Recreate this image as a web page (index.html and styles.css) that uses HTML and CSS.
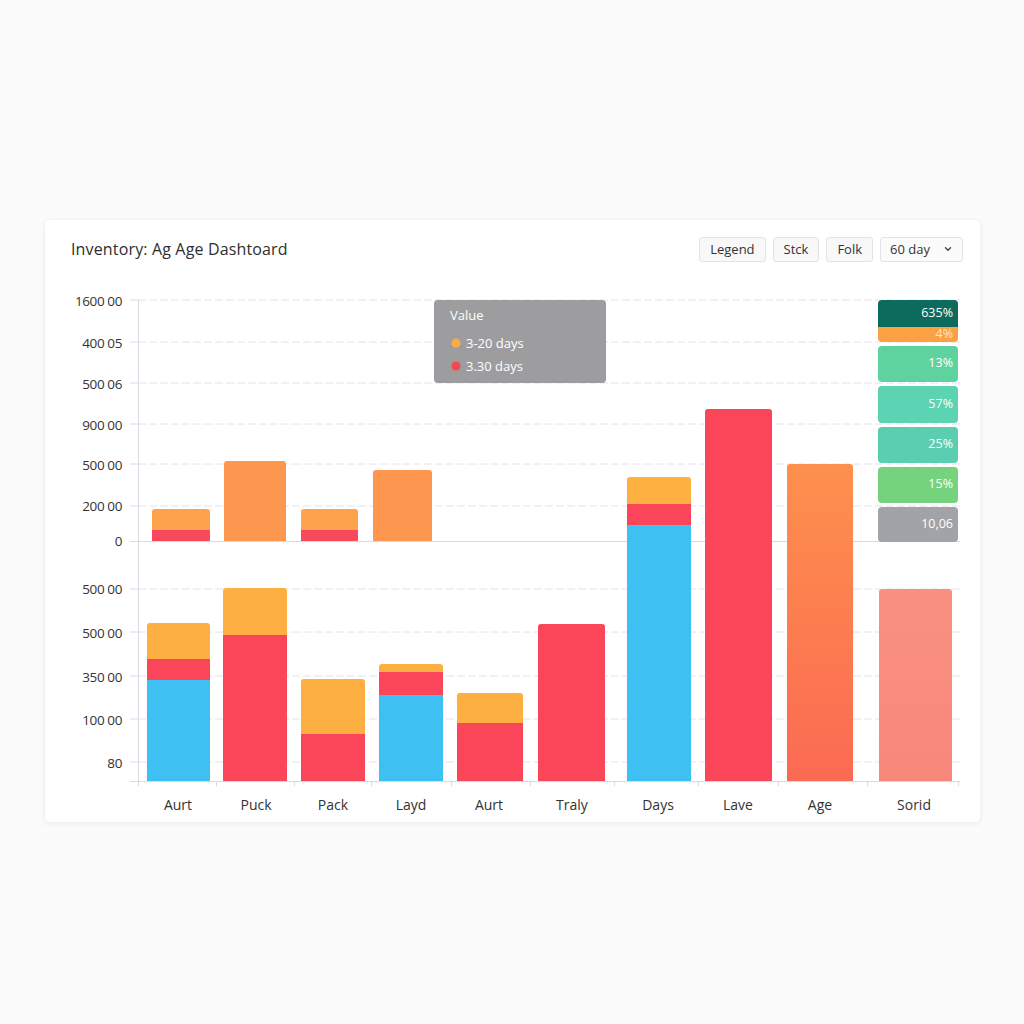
FILE: index.html
```html
<!DOCTYPE html>
<html lang="en">
<head>
<meta charset="utf-8">
<title>Inventory Age Dashboard</title>
<link rel="stylesheet" href="styles.css">
</head>
<body>
<main class="card">
  <header class="card-head">
    <h1 class="title">Inventory: Ag Age Dashtoard</h1>
    <div class="tools">
      <button class="btn">Legend</button>
      <button class="btn">Stck</button>
      <button class="btn">Folk</button>
      <button class="btn select">60 day <svg class="caret" width="8" height="6" viewBox="0 0 8 6"><path d="M1.5 1.8 L4 4.2 L6.5 1.8" fill="none" stroke="#444" stroke-width="1.4" stroke-linecap="round" stroke-linejoin="round"/></svg></button>
    </div>
  </header>
  <svg class="chart" width="935" height="544" viewBox="45 278 935 544">
    <defs>
      <linearGradient id="gAge" x1="0" y1="0" x2="0" y2="1">
        <stop offset="0" stop-color="#fe904d"/>
        <stop offset="1" stop-color="#fb6a53"/>
      </linearGradient>
      <linearGradient id="gSorid" x1="0" y1="0" x2="0" y2="1">
        <stop offset="0" stop-color="#f99180"/>
        <stop offset="1" stop-color="#f8877b"/>
      </linearGradient>
    </defs>

    <!-- grid -->
    <g class="grid">
      <line x1="138" y1="300" x2="960" y2="300"/>
      <line x1="138" y1="342" x2="960" y2="342"/>
      <line x1="138" y1="383" x2="960" y2="383"/>
      <line x1="138" y1="424" x2="960" y2="424"/>
      <line x1="138" y1="464" x2="960" y2="464"/>
      <line x1="138" y1="506" x2="960" y2="506"/>
      <line x1="138" y1="589" x2="960" y2="589"/>
      <line x1="138" y1="632" x2="960" y2="632"/>
      <line x1="138" y1="676" x2="960" y2="676"/>
      <line x1="138" y1="719" x2="960" y2="719"/>
      <line x1="138" y1="762" x2="960" y2="762"/>
    </g>
    <g class="axis">
      <line x1="130" y1="541.5" x2="960" y2="541.5"/>
      <line x1="138.5" y1="300" x2="138.5" y2="786"/>
      <line x1="130" y1="781.5" x2="960" y2="781.5"/>
      <line x1="130" y1="300" x2="138" y2="300"/>
      <line x1="130" y1="342" x2="138" y2="342"/>
      <line x1="130" y1="383" x2="138" y2="383"/>
      <line x1="130" y1="424" x2="138" y2="424"/>
      <line x1="130" y1="464" x2="138" y2="464"/>
      <line x1="130" y1="506" x2="138" y2="506"/>
      <line x1="130" y1="589" x2="138" y2="589"/>
      <line x1="130" y1="632" x2="138" y2="632"/>
      <line x1="130" y1="676" x2="138" y2="676"/>
      <line x1="130" y1="719" x2="138" y2="719"/>
      <line x1="130" y1="762" x2="138" y2="762"/>
      <line x1="216.5" y1="781" x2="216.5" y2="786"/>
      <line x1="294.5" y1="781" x2="294.5" y2="786"/>
      <line x1="371.5" y1="781" x2="371.5" y2="786"/>
      <line x1="451.5" y1="781" x2="451.5" y2="786"/>
      <line x1="530.5" y1="781" x2="530.5" y2="786"/>
      <line x1="614.5" y1="781" x2="614.5" y2="786"/>
      <line x1="698.5" y1="781" x2="698.5" y2="786"/>
      <line x1="778.5" y1="781" x2="778.5" y2="786"/>
      <line x1="867.5" y1="781" x2="867.5" y2="786"/>
      <line x1="958.5" y1="781" x2="958.5" y2="786"/>
    </g>

    <!-- y labels -->
    <g class="ylab">
      <text x="122" y="302">1600 00</text>
      <text x="122" y="344">400 05</text>
      <text x="122" y="385">500 06</text>
      <text x="122" y="426">900 00</text>
      <text x="122" y="466">500 00</text>
      <text x="122" y="507">200 00</text>
      <text x="122" y="542">0</text>
      <text x="122" y="590">500 00</text>
      <text x="122" y="634">500 00</text>
      <text x="122" y="678">350 00</text>
      <text x="122" y="721">100 00</text>
      <text x="122" y="764">80</text>
    </g>

    <!-- upper bars -->
    <path fill="#fda34c" d="M152 541 V512 Q152 509 155 509 H207 Q210 509 210 512 V541 Z"/>
    <rect fill="#f84a5c" x="152" y="530" width="58" height="11"/>
    <path fill="#fd974f" d="M224 541 V464 Q224 461 227 461 H283 Q286 461 286 464 V541 Z"/>
    <path fill="#fda34c" d="M301 541 V512 Q301 509 304 509 H355 Q358 509 358 512 V541 Z"/>
    <rect fill="#f84a5c" x="301" y="530" width="57" height="11"/>
    <path fill="#fd974f" d="M373 541 V473 Q373 470 376 470 H429 Q432 470 432 473 V541 Z"/>

    <!-- lower bars -->
    <path fill="#feaf42" d="M147 781 V626 Q147 623 150 623 H207 Q210 623 210 626 V781 Z"/>
    <rect fill="#fb4659" x="147" y="659" width="63" height="122"/>
    <rect fill="#3ec0f2" x="147" y="680" width="63" height="101"/>

    <path fill="#feaf42" d="M223 781 V591 Q223 588 226 588 H284 Q287 588 287 591 V781 Z"/>
    <rect fill="#fb4659" x="223" y="635" width="64" height="146"/>

    <path fill="#feaf42" d="M301 781 V682 Q301 679 304 679 H362 Q365 679 365 682 V781 Z"/>
    <rect fill="#fb4659" x="301" y="734" width="64" height="47"/>

    <path fill="#feaf42" d="M379 781 V667 Q379 664 382 664 H440 Q443 664 443 667 V781 Z"/>
    <rect fill="#fb4659" x="379" y="672" width="64" height="109"/>
    <rect fill="#3ec0f2" x="379" y="695" width="64" height="86"/>

    <path fill="#feaf42" d="M457 781 V696 Q457 693 460 693 H520 Q523 693 523 696 V781 Z"/>
    <rect fill="#fb4659" x="457" y="723" width="66" height="58"/>

    <path fill="#fb4659" d="M538 781 V627 Q538 624 541 624 H602 Q605 624 605 627 V781 Z"/>

    <path fill="#feb040" d="M627 781 V480 Q627 477 630 477 H688 Q691 477 691 480 V781 Z"/>
    <rect fill="#fb4659" x="627" y="504" width="64" height="277"/>
    <rect fill="#3ec0f2" x="627" y="525" width="64" height="256"/>

    <path fill="#fb4659" d="M705 781 V412 Q705 409 708 409 H769 Q772 409 772 412 V781 Z"/>
    <path fill="url(#gAge)" d="M787 781 V467 Q787 464 790 464 H850 Q853 464 853 467 V781 Z"/>
    <path fill="url(#gSorid)" d="M879 781 V592 Q879 589 882 589 H949 Q952 589 952 592 V781 Z"/>

    <!-- x labels -->
    <g class="xlab">
      <text x="178" y="810">Aurt</text>
      <text x="256" y="810">Puck</text>
      <text x="333" y="810">Pack</text>
      <text x="411" y="810">Layd</text>
      <text x="489" y="810">Aurt</text>
      <text x="572" y="810">Traly</text>
      <text x="658" y="810">Days</text>
      <text x="738" y="810">Lave</text>
      <text x="820" y="810">Age</text>
      <text x="914" y="810">Sorid</text>
    </g>

    <!-- tooltip -->
    <g class="tip">
      <rect x="434" y="300" width="172" height="83" rx="4" fill="#9d9da0"/>
      <text class="tip-title" x="450" y="320">Value</text>
      <circle cx="456" cy="343" r="4.5" fill="#fdaa45"/>
      <text class="tip-item" x="466" y="348">3-20 days</text>
      <circle cx="456" cy="366" r="4.5" fill="#f8474f"/>
      <text class="tip-item" x="466" y="371">3.30 days</text>
    </g>

    <!-- right stack -->
    <g class="stack">
      <path fill="#0c6b5c" d="M878 327 V304 Q878 300 882 300 H954 Q958 300 958 304 V327 Z"/>
      <path fill="#fca044" d="M878 327 H958 V338 Q958 342 954 342 H882 Q878 342 878 338 Z"/>
      <rect fill="#5fd39f" x="878" y="346" width="80" height="36" rx="4"/>
      <rect fill="#5cd3b2" x="878" y="386" width="80" height="37" rx="4"/>
      <rect fill="#5bcdb0" x="878" y="427" width="80" height="36" rx="4"/>
      <rect fill="#74d37c" x="878" y="467" width="80" height="36" rx="4"/>
      <rect fill="#a2a2a9" x="878" y="507" width="80" height="35" rx="4"/>
      <text x="953" y="314">635%</text>
      <text class="light" x="953" y="335">4%</text>
      <text x="953" y="364">13%</text>
      <text x="953" y="405">57%</text>
      <text x="953" y="445">25%</text>
      <text x="953" y="485">15%</text>
      <text x="953" y="525">10,06</text>
    </g>
  </svg>
</main>
</body>
</html>
```

FILE: styles.css
```css
* { box-sizing: border-box; }

html, body {
  margin: 0;
  padding: 0;
  background: #fbfbfc;
}

body {
  width: 1024px;
  height: 1024px;
  padding: 220px 0 0 45px;
  font-family: "Open Sans", "Liberation Sans", sans-serif;
  color: #333;
}

.card {
  width: 935px;
  height: 602px;
  background: #ffffff;
  border-radius: 4px;
  box-shadow: 0 1px 6px rgba(0, 0, 0, 0.08), 0 0 1px rgba(0, 0, 0, 0.06);
  display: flex;
  flex-direction: column;
  overflow: hidden;
}

.card-head {
  height: 58px;
  display: flex;
  align-items: center;
  justify-content: space-between;
  padding: 0 17px 0 26px;
}

.title {
  margin: 0;
  font-size: 16px;
  font-weight: 400;
  color: #2e2e30;
  letter-spacing: 0.15px;
}

.tools {
  display: flex;
  gap: 7px;
}

.btn {
  height: 25px;
  padding: 0 10px;
  border: 1px solid #e3e3e6;
  border-radius: 3px;
  background: #f8f8f9;
  font-family: "Open Sans", "Liberation Sans", sans-serif;
  font-size: 13px;
  color: #333;
  display: flex;
  align-items: center;
  gap: 14px;
}

.btn.select {
  padding: 0 10px 0 9px;
  background: #fbfbfb;
}

.caret { display: block; }

.chart {
  display: block;
  font-family: "Open Sans", "Liberation Sans", sans-serif;
}

.grid line {
  stroke: #e2e2ec;
  stroke-width: 1;
  stroke-dasharray: 8 3;
}

.axis line {
  stroke: #d9d9e4;
  stroke-width: 1;
}

.ylab text {
  font-size: 13.5px;
  fill: #333335;
  text-anchor: end;
  dominant-baseline: middle;
  letter-spacing: -0.4px;
}

.xlab text {
  font-size: 14px;
  fill: #333;
  text-anchor: middle;
}

.tip-title {
  font-size: 13px;
  fill: #ffffff;
}

.tip-item {
  font-size: 13px;
  fill: #ffffff;
}

.stack text {
  font-size: 12.5px;
  fill: #ffffff;
  text-anchor: end;
  dominant-baseline: middle;
}

.stack text.light {
  fill: #fde6c8;
}
```
